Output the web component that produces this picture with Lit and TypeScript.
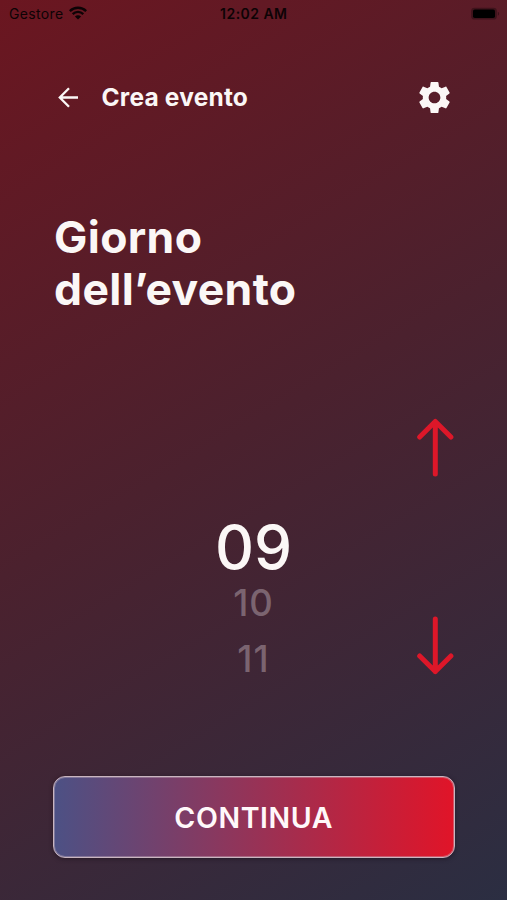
import { LitElement, html, css } from "lit";
import { customElement, state } from "lit/decorators.js";

@customElement("app-root")
export class AppRoot extends LitElement {
  @state() private day = 9;

  static styles = css`
    :host {
      display: flex;
      flex-direction: column;
      box-sizing: border-box;
      width: 100%;
      height: 900px;
      overflow: hidden;
      font-family: Inter, "Liberation Sans", sans-serif;
      color: #fbf7f6;
      background: linear-gradient(149deg, #6b1620 0%, #4b212e 48%, #2b2e42 100%);
    }
    svg { display: block; }
    button {
      font: inherit;
      color: inherit;
      border: 0;
      padding: 0;
      background: none;
    }
    .status {
      display: grid;
      grid-template-columns: 1fr auto 1fr;
      align-items: center;
      height: 27px;
      padding: 0 7px 0 9px;
      color: #0d0305;
      font-size: 14px;
      line-height: 27px;
    }
    .carrier { display: flex; align-items: center; gap: 6px; letter-spacing: 0.35px; }
    .carrier svg { margin: -2px 0 0 -1px; }
    .clock { margin-right: 1.5px; font-weight: 600; letter-spacing: 0.45px; }
    .battery { justify-self: end; }
    .header {
      display: flex;
      align-items: center;
      height: 40px;
      margin: 50px 53px 0 54px;
    }
    .name { margin-left: 21.5px; font-size: 24.5px; letter-spacing: 0.2px; font-weight: 700; line-height: 40px; }
    .gear { margin-left: auto; }
    .title {
      margin: 94px 54px 0;
      font-size: 44.5px;
      line-height: 52px;
      letter-spacing: 0.35px;
      font-weight: 700;
    }
    .picker {
      display: grid;
      grid-template-columns: 1fr auto 1fr;
      height: 258px;
      margin: 102px 53px 0;
    }
    .days { grid-column: 2; padding-top: 97px; text-align: center; }
    .current { font-size: 60.5px; line-height: 66px; font-weight: 500; }
    .next { font-size: 36.5px; line-height: 56px; font-weight: 500; letter-spacing: 1px; color: #7b6470; }
    .steps {
      display: flex;
      flex-direction: column;
      justify-content: space-between;
      justify-self: end;
      height: 259px;
      padding-top: 0.5px;
      box-sizing: border-box;
    }
    .next.first { margin-top: -5px; }
    .continue {
      box-sizing: border-box;
      height: 82px;
      margin: 101px 52.5px 0 53px;
      border: 1px solid #c9b5c0;
      border-radius: 12px;
      background: linear-gradient(90deg, #4c5185, #e11428) border-box;
      box-shadow: inset 0 0 0 1px rgba(201, 181, 192, 0.4), 0 1px 4px rgba(20, 10, 20, 0.5);
      color: #fff8fa;
      font-size: 28.5px;
      font-weight: 600;
      letter-spacing: 0.6px;
      text-align: center;
    }
  `;

  private label(n: number) {
    return String(n).padStart(2, "0");
  }

  render() {
    return html`
      <div class="status">
        <div class="carrier">
          <span>Gestore</span>
          <svg width="18" height="14" viewBox="0 0 18 14" fill="none" stroke="currentColor">
            <path d="M.8 5.1C5.3.6 12.7.6 17.2 5.1" stroke-width="2.5" />
            <path d="M3.7 8.1C6.6 5.2 11.4 5.2 14.3 8.1" stroke-width="2.3" />
            <path d="M9 13.5 5.9 10.4C7.6 8.8 10.4 8.8 12.1 10.4Z" fill="currentColor" stroke="none" />
          </svg>
        </div>
        <span class="clock">12:02 AM</span>
        <svg class="battery" width="30" height="14" viewBox="0 0 30 14">
          <rect x="1.1" y=".8" width="25.8" height="11.8" rx="3.4" fill="#000" fill-opacity=".3" />
          <rect x="3" y="2.4" width="22" height="8.6" rx="1.8" fill="#000" />
          <path d="M27.8 4.8c1.8.8 1.8 3.2 0 4z" fill="#000" fill-opacity=".35" />
        </svg>
      </div>
      <div class="header">
        <button aria-label="Indietro">
          <svg width="26" height="26" viewBox="0 0 26 26" fill="none" stroke="currentColor" stroke-width="2.3">
            <path d="M24 13.5H6M15 4.3 5.8 13.5l9.2 9.2" />
          </svg>
        </button>
        <span class="name">Crea evento</span>
        <button class="gear" aria-label="Impostazioni">
          <svg width="39" height="39" viewBox="0 0 24 24" fill="currentColor">
            <path d="M19.14 12.94c.04-.3.06-.61.06-.94 0-.32-.02-.64-.07-.94l2.03-1.58c.18-.14.23-.41.12-.61l-1.92-3.32c-.12-.22-.37-.29-.59-.22l-2.39.96c-.5-.38-1.03-.7-1.62-.94l-.36-2.54c-.04-.24-.24-.41-.48-.41h-3.84c-.24 0-.43.17-.47.41l-.36 2.54c-.59.24-1.13.57-1.62.94l-2.39-.96c-.22-.08-.47 0-.59.22L2.74 8.87c-.12.21-.08.47.12.61l2.03 1.58c-.05.3-.09.63-.09.94s.02.64.07.94l-2.03 1.58c-.18.14-.23.41-.12.61l1.92 3.32c.12.22.37.29.59.22l2.39-.96c.5.38 1.03.7 1.62.94l.36 2.54c.05.24.24.41.48.41h3.84c.24 0 .44-.17.47-.41l.36-2.54c.59-.24 1.13-.56 1.62-.94l2.39.96c.22.08.47 0 .59-.22l1.92-3.32c.12-.22.07-.47-.12-.61l-2.01-1.58zM12 15.6c-1.98 0-3.6-1.62-3.6-3.6s1.62-3.6 3.6-3.6 3.6 1.62 3.6 3.6-1.62 3.6-3.6 3.6z" />
          </svg>
        </button>
      </div>
      <div class="title">Giorno<br />dell’evento</div>
      <div class="picker">
        <div class="days">
          <div class="current">${this.label(this.day)}</div>
          <div class="next first">${this.label(this.day + 1)}</div>
          <div class="next">${this.label(this.day + 2)}</div>
        </div>
        <div class="steps">
          <button aria-label="Giorno precedente" @click=${() => (this.day = Math.max(1, this.day - 1))}>
            <svg width="38" height="60" viewBox="0 0 38 60" fill="none" stroke="#dd1729" stroke-width="5" stroke-linecap="round" stroke-linejoin="round">
              <path d="M19.3 56V3.5M3.7 19 19.3 3.5 34.9 19" />
            </svg>
          </button>
          <button aria-label="Giorno successivo" @click=${() => (this.day = Math.min(29, this.day + 1))}>
            <svg width="38" height="60" viewBox="0 0 38 60" fill="none" stroke="#dd1729" stroke-width="5" stroke-linecap="round" stroke-linejoin="round">
              <path d="M19.3 3V55.5M3.7 40 19.3 55.5 34.9 40" />
            </svg>
          </button>
        </div>
      </div>
      <button class="continue">CONTINUA</button>
    `;
  }
}
